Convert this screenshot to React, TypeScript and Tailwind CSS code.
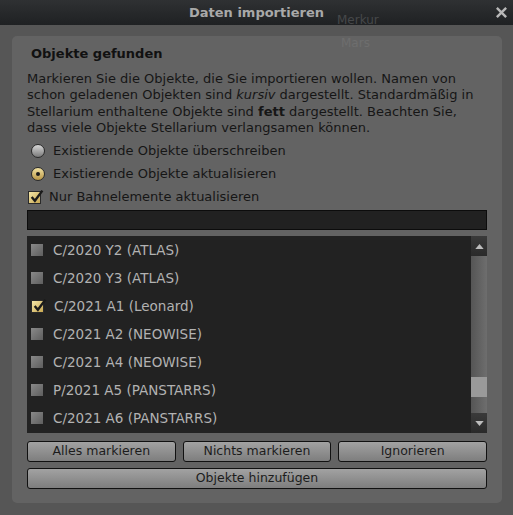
import React from "react";

const items = [
  { name: "C/2020 Y2 (ATLAS)", checked: false },
  { name: "C/2020 Y3 (ATLAS)", checked: false },
  { name: "C/2021 A1 (Leonard)", checked: true },
  { name: "C/2021 A2 (NEOWISE)", checked: false },
  { name: "C/2021 A4 (NEOWISE)", checked: false },
  { name: "P/2021 A5 (PANSTARRS)", checked: false },
  { name: "C/2021 A6 (PANSTARRS)", checked: false },
];

function Check({ checked }: { checked: boolean }) {
  return (
    <span className="relative inline-block w-[13px] h-[13px] shrink-0 bg-gradient-to-br from-[#f3e6a8] to-[#c9a850] border border-[#2a2a2a]">
      {checked && (
        <svg viewBox="0 0 14 14" className="absolute left-[0px] top-[-3px] w-[15px] h-[15px]">
          <path d="M2.5 7.5 L5.5 11 L12.5 1.5" fill="none" stroke="#1a1a1a" strokeWidth="2.2" />
        </svg>
      )}
    </span>
  );
}

function Box({ checked }: { checked: boolean }) {
  if (checked) return <Check checked />;
  return <span className="inline-block w-[12px] h-[12px] shrink-0 bg-gradient-to-br from-[#8a8a8a] to-[#5e5e5e]" />;
}

function Radio({ on }: { on: boolean }) {
  return (
    <span
      className={
        "flex items-center justify-center w-[14px] h-[14px] rounded-full border border-[#2a2a2a] " +
        (on ? "bg-gradient-to-b from-[#f2e2a0] to-[#b89645]" : "bg-gradient-to-b from-[#d8d8d8] to-[#7a7a7a]")
      }
    >
      {on && <span className="w-[4px] h-[4px] rounded-full bg-[#1a1a1a]" />}
    </span>
  );
}

function Btn({ children, className = "" }: { children: React.ReactNode; className?: string }) {
  return (
    <button className={"h-[21px] rounded-[3px] border border-[#111] bg-gradient-to-b from-[#a2a2a2] to-[#7e7e7e] text-[12.5px] text-[#1c1c1c] " + className}>
      {children}
    </button>
  );
}

export default function App() {
  return (
    <div className="w-[513px] h-[515px] flex flex-col bg-[#565656] text-[13px] font-['DejaVu_Sans',sans-serif] overflow-hidden">
      <div className="relative h-[25px] shrink-0 flex items-center justify-center bg-gradient-to-b from-[#2f3133] to-[#1f2123]">
        <span className="font-bold text-[13px] text-[#a9a9a9]">Daten importieren</span>
        <span className="absolute left-[337px] top-[11px] text-[12px] text-[#46484a]">Merkur</span>
        <svg viewBox="0 0 14 14" className="absolute right-[5px] top-[6px] w-[13px] h-[13px]">
          <path d="M2 2 L12 12 M12 2 L2 12" stroke="#b8b8b8" strokeWidth="2.6" />
        </svg>
      </div>
      <div className="flex-1 flex pl-[12px] pr-[11px] pt-[11px] pb-[12px]">
        <div className="relative flex-1 flex flex-col rounded-[5px] bg-[#636363] px-[15px] pt-[7px]">
          <span className="absolute left-[329px] top-[-2px] text-[12px] text-[#6e6e6e]">Mars</span>
          <div className="font-bold text-[13px] text-[#111] pl-[4px] h-[22px] flex items-center">Objekte gefunden</div>
          <p className="mt-[6px] text-[#161616] leading-[16.3px]">
            Markieren Sie die Objekte, die Sie importieren wollen. Namen von schon geladenen Objekten sind <i>kursiv</i> dargestellt. Standardmäßig in Stellarium enthaltene Objekte sind <b>fett</b> dargestellt. Beachten Sie, dass viele Objekte Stellarium verlangsamen können.
          </p>
          <div className="mt-[4px] flex items-center gap-[8px] pl-[4px] h-[22px] text-[#161616]">
            <Radio on={false} />
            <span>Existierende Objekte überschreiben</span>
          </div>
          <div className="mt-[1px] flex items-center gap-[8px] pl-[4px] h-[22px] text-[#161616]">
            <Radio on />
            <span>Existierende Objekte aktualisieren</span>
          </div>
          <div className="mt-[1px] flex items-center gap-[8px] pl-[1px] h-[22px] text-[#161616]">
            <Check checked />
            <span>Nur Bahnelemente aktualisieren</span>
          </div>
          <div className="mt-[2px] h-[20px] bg-[#212121] border border-[#0c0c0c]" />
          <div className="mt-[6px] h-[197px] flex bg-[#222222]">
            <div className="flex-1 flex flex-col">
              {items.map((it) => (
                <div key={it.name} className="h-[28px] flex items-center gap-[10px] pl-[4px] text-[13.5px] text-[#b2b2b2]">
                  <Box checked={it.checked} />
                  <span>{it.name}</span>
                </div>
              ))}
            </div>
            <div className="w-[16px] flex flex-col">
              <div className="h-[20px] flex items-center justify-center bg-gradient-to-b from-[#3a3a3a] to-[#2a2a2a]">
                <svg viewBox="0 0 10 6" className="w-[9px] h-[5px]">
                  <path d="M0 6 L5 0 L10 6 Z" fill="#bdbdbd" />
                </svg>
              </div>
              <div className="flex-1 flex flex-col bg-gradient-to-r from-[#555] to-[#6e6e6e]">
                <div className="h-[121px]" />
                <div className="h-[20px] bg-[#9a9a9a]" />
              </div>
              <div className="h-[20px] flex items-center justify-center bg-gradient-to-b from-[#3a3a3a] to-[#2a2a2a]">
                <svg viewBox="0 0 10 6" className="w-[9px] h-[5px]">
                  <path d="M0 0 L10 0 L5 6 Z" fill="#bdbdbd" />
                </svg>
              </div>
            </div>
          </div>
          <div className="mt-[8px] grid grid-cols-3 gap-[7px]">
            <Btn>Alles markieren</Btn>
            <Btn>Nichts markieren</Btn>
            <Btn>Ignorieren</Btn>
          </div>
          <Btn className="mt-[6px] w-full">Objekte hinzufügen</Btn>
        </div>
      </div>
    </div>
  );
}
